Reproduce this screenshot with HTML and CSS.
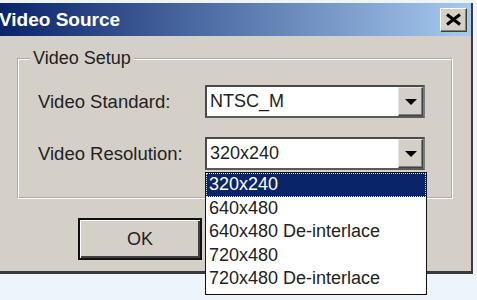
FILE: index.html
```html
<!DOCTYPE html>
<html lang="en">
<head>
    <meta charset="UTF-8">
    <title>Video Source</title>
    <link rel="stylesheet" href="styles.css">
</head>
<body>
    <div class="window">
        <div class="titlebar">
            <span class="title">Video Source</span>
            <span class="close">
                <svg width="17" height="13" viewBox="0 0 17 13"><path d="M2 1.5 L15 11.5 M15 1.5 L2 11.5" stroke="#000" stroke-width="3"/></svg>
            </span>
        </div>
        <div class="body">
            <div class="group">
                <span class="legend">Video Setup</span>
                <div class="row">
                    <span class="label">Video Standard:</span>
                    <div class="combo">
                        <span class="value">NTSC_M</span>
                        <span class="drop"><span class="arrow"></span></span>
                    </div>
                </div>
                <div class="row">
                    <span class="label">Video Resolution:</span>
                    <div class="combo">
                        <span class="value">320x240</span>
                        <span class="drop"><span class="arrow"></span></span>
                        <!-- lista aperta -->
                        <ul class="list">
                            <li class="selected">320x240</li>
                            <li>640x480</li>
                            <li>640x480 De-interlace</li>
                            <li>720x480</li>
                            <li>720x480 De-interlace</li>
                        </ul>
                    </div>
                </div>
            </div>
            <div class="buttons">
                <button class="btn default">OK</button>
            </div>
        </div>
    </div>
</body>
</html>
```

FILE: styles.css
```css
/* Generale */
html {
    height: 100%;
}

body {
    margin: 0;
    min-height: 297px;
    padding-top: 3px;
    background-color: #edf4fa;
    font-family: "Liberation Sans", Arial, sans-serif;
    color: #222;
}

.window {
    width: 471px;
    border-right: 2px solid #3a3a3a;
    border-bottom: 3px solid #3a3a3a;
    background-color: #d4d0c8;
}

/* Barra del titolo */
.titlebar {
    height: 33px;
    display: flex;
    justify-content: space-between;
    align-items: center;
    background: linear-gradient(to right, #0a246a, #a6caf0);
}

.title {
    margin-left: -1px;
    font-size: 19px;
    font-weight: bold;
    color: #fff;
}

.close {
    width: 27px;
    height: 24px;
    margin-right: 4px;
    display: flex;
    justify-content: center;
    align-items: center;
    box-sizing: border-box;
    background-color: #d4d0c8;
    border: 1px solid;
    border-color: #fff #404040 #404040 #fff;
    box-shadow: inset -1px -1px 0 #808080;
}

/* Contenuto */
.body {
    height: 235px;
    padding-top: 22px;
    box-sizing: border-box;
}

.group {
    position: relative;
    width: 436px;
    box-sizing: border-box;
    margin-left: 17px;
    padding: 25px 26px 27px 19px;
    border: 2px groove #fff;
}

.legend {
    position: absolute;
    top: -12px;
    left: 11px;
    padding: 0 3px;
    font-size: 18px;
    line-height: 20px;
    background-color: #d4d0c8;
}

.row {
    display: flex;
    align-items: center;
}

.row + .row {
    margin-top: 19px;
}

.label {
    width: 167px;
    font-size: 18.5px;
}

/* Combo box */
.combo {
    position: relative;
    width: 220px;
    height: 33px;
    box-sizing: border-box;
    display: flex;
    align-items: center;
    background-color: #fff;
    border: 2px solid;
    border-color: #4a4a4a #7a7a7a #5a5a5a #4a4a4a;
}

.value {
    flex: 1;
    padding-left: 3px;
    font-size: 18px;
}

.drop {
    width: 25px;
    height: 29px;
    box-sizing: border-box;
    display: flex;
    justify-content: center;
    align-items: center;
    background-color: #d4d0c8;
    border: 1px solid;
    border-color: #e8e6e0 #404040 #404040 #e8e6e0;
    box-shadow: inset -1px -1px 0 #808080;
}

.arrow {
    width: 0;
    height: 0;
    border-left: 6px solid transparent;
    border-right: 6px solid transparent;
    border-top: 6px solid #000;
}

/* Lista aperta */
.list {
    position: absolute;
    top: calc(100% + 4px);
    left: -2px;
    width: 222px;
    box-sizing: border-box;
    margin: 0;
    padding: 0 0 3px 0;
    list-style: none;
    background-color: #fff;
    border: 1px solid #111;
    z-index: 2;
}

.list li {
    height: 23.5px;
    line-height: 23.5px;
    padding-left: 3px;
    font-size: 18px;
}

.list li.selected {
    background-color: #0a246a;
    color: #fff;
    outline: 1px dotted #e8e8b0;
    outline-offset: -1px;
}

/* Bottone */
.buttons {
    display: flex;
    margin-top: 19px;
    padding-left: 78px;
}

.btn {
    width: 124px;
    height: 42px;
    font-family: inherit;
    font-size: 18px;
    color: #222;
    background-color: #d4d0c8;
    border: 2px solid #111;
    box-shadow: inset 1px 1px 0 #fff, inset -2px -2px 0 #404040;
}
```
